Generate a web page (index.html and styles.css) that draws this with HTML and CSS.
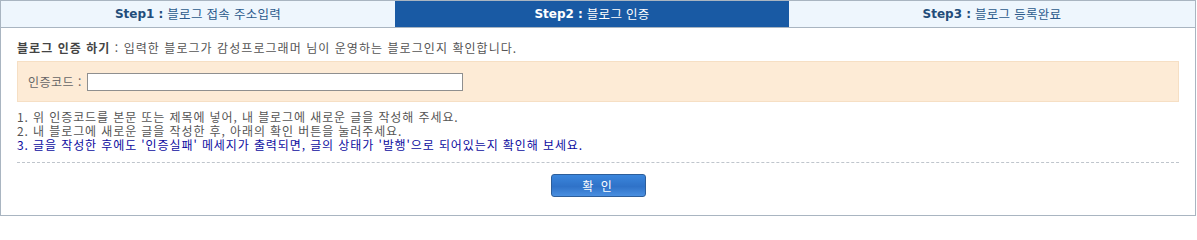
FILE: index.html
```html
<!DOCTYPE html>
<html lang="ko">
<head>
<meta charset="utf-8">
<link rel="stylesheet" href="styles.css">
</head>
<body>
<div class="wrap">
  <div class="tabs">
    <div class="tab"><b>Step1 :</b> 블로그 접속 주소입력</div>
    <div class="tab active"><b>Step2 :</b> 블로그 인증</div>
    <div class="tab last"><b>Step3 :</b> 블로그 등록완료</div>
  </div>
  <div class="content">
    <p class="title"><strong>블로그 인증 하기</strong> : 입력한 블로그가 감성프로그래머 님이 운영하는 블로그인지 확인합니다.</p>
    <div class="codebox">
      <span class="label">인증코드 :</span>
      <span class="input"></span>
    </div>
    <ol class="notes">
      <li>1. 위 인증코드를 본문 또는 제목에 넣어, 내 블로그에 새로운 글을 작성해 주세요.</li>
      <li>2. 내 블로그에 새로운 글을 작성한 후, 아래의 확인 버튼을 눌러주세요.</li>
      <li class="warn">3. 글을 작성한 후에도 '인증실패' 메세지가 출력되면, 글의 상태가 '발행'으로 되어있는지 확인해 보세요.</li>
    </ol>
    <div class="divider"></div>
    <div class="actions">
      <button class="btn">확 인</button>
    </div>
  </div>
</div>
</body>
</html>
```
FILE: styles.css
```css
* { box-sizing: border-box; }
html, body { margin: 0; padding: 0; background: #fff; }
body {
  font-family: "Noto Sans CJK KR", "DejaVu Sans", sans-serif;
  font-size: 12px;
  color: #555;
}
.wrap {
  width: 1196px;
  height: 216px;
  border: 1px solid #a9b5c1;
}
.tabs {
  display: flex;
  height: 27px;
  border-bottom: 1px solid #a9b5c1;
}
.tab {
  flex: 0 0 394px;
  background: #eef6fd;
  color: #2b5a8c;
  font-size: 12.5px;
  display: flex;
  align-items: center;
  justify-content: center;
  line-height: 26px;
  letter-spacing: 0.3px;
}
.tab b {
  font-family: "DejaVu Sans", sans-serif;
  font-weight: bold;
  font-size: 12px;
  margin-right: 4px;
  color: #234d7a;
  letter-spacing: 0;
}
.tab.active {
  background: #195aa4;
  color: #fff;
}
.tab.active b { color: #fff; }
.tab.last { flex: 1 1 auto; }
.content {
  padding: 12px 16px 0 16px;
  letter-spacing: 0.9px;
}
.title {
  margin: 0 0 5px 0;
  line-height: 16px;
  font-size: 12px;
  color: #555;
  letter-spacing: 1.05px;
}
.title strong {
  color: #444;
  font-weight: bold;
}
.codebox {
  height: 41px;
  background: #fdebd6;
  border: 1px solid #f6dfc4;
  display: flex;
  align-items: center;
  padding-left: 10px;
}
.label { color: #666; margin-right: 5px; letter-spacing: 0.5px; }
.input {
  display: block;
  width: 376px;
  height: 18px;
  background: #fff;
  border: 1px solid #8f8f8f;
}
.notes {
  list-style: none;
  margin: 8px 0 0 0;
  padding: 0;
  line-height: 14px;
  color: #555;
}
.notes .warn { color: #0d0ca0; }
.divider {
  margin: 10px 0 0 0;
  border-top: 1px dashed #bfc5cc;
  height: 0;
}
.actions {
  display: flex;
  justify-content: center;
  padding-top: 11px;
}
.btn {
  width: 95px;
  height: 23px;
  border: 1px solid #2d5e9a;
  border-radius: 3px;
  background: linear-gradient(#3b86dc, #2f72c8 55%, #4a8fe0);
  color: #fff;
  font-family: "Noto Sans CJK KR", sans-serif;
  font-size: 12px;
  letter-spacing: 2px;
  padding: 0;
  line-height: 20px;
}
```
